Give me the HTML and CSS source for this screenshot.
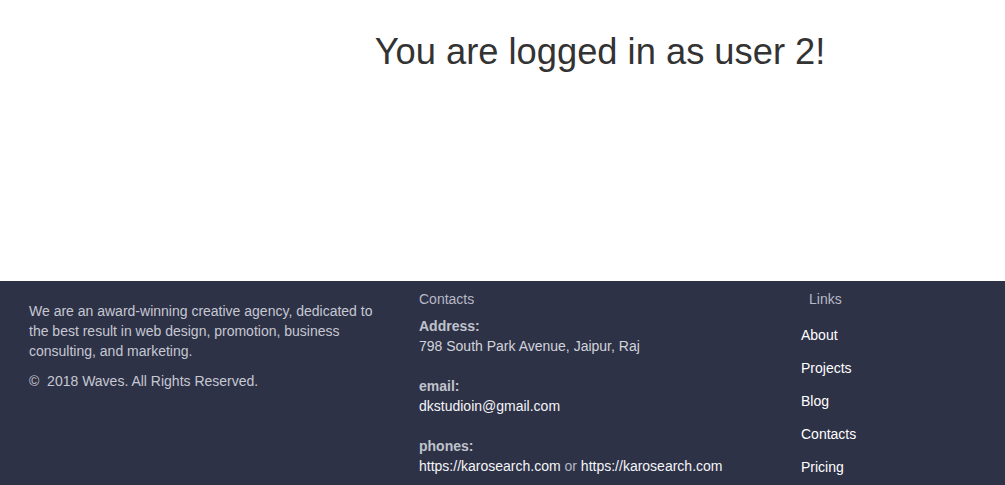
FILE: index.html
```html
<!DOCTYPE html>
<html lang="en">
<head>
<meta charset="utf-8">
<title>Logged in</title>
<link rel="stylesheet" href="styles.css">
</head>
<body>
<main class="hero">
  <h1 class="hero-title">You are logged in as user 2!</h1>
</main>
<footer class="footer">
  <div class="footer-about">
    <p class="about-text">We are an award-winning creative agency, dedicated to the best result in web design, promotion, business consulting, and marketing.</p>
    <p class="copyright">&copy;&nbsp; 2018 Waves. All Rights Reserved.</p>
  </div>
  <div class="footer-contacts">
    <div class="footer-heading">Contacts</div>
    <dl class="contact-list">
      <div class="contact-item">
        <dt class="contact-label">Address:</dt>
        <dd class="contact-value contact-plain">798 South Park Avenue, Jaipur, Raj</dd>
      </div>
      <div class="contact-item">
        <dt class="contact-label">email:</dt>
        <dd class="contact-value"><a class="footer-link" href="#">dkstudioin@gmail.com</a></dd>
      </div>
      <div class="contact-item">
        <dt class="contact-label">phones:</dt>
        <dd class="contact-value"><a class="footer-link" href="#">https://karosearch.com</a> or <a class="footer-link" href="#">https://karosearch.com</a></dd>
      </div>
    </dl>
  </div>
  <div class="footer-links">
    <div class="footer-heading links-heading">Links</div>
    <ul class="link-list">
      <li><a class="footer-link" href="#">About</a></li>
      <li><a class="footer-link" href="#">Projects</a></li>
      <li><a class="footer-link" href="#">Blog</a></li>
      <li><a class="footer-link" href="#">Contacts</a></li>
      <li><a class="footer-link" href="#">Pricing</a></li>
    </ul>
  </div>
</footer>
</body>
</html>
```

FILE: styles.css
```css
* { box-sizing: border-box; }
html, body {
  margin: 0;
  padding: 0;
  background: #ffffff;
  font-family: "Liberation Sans", Arial, Helvetica, sans-serif;
}
.hero {
  height: 281px;
  padding-top: 32px;
  padding-left: 195px;
}
.hero-title {
  margin: 0;
  font-size: 36.3px;
  font-weight: 400;
  line-height: 40px;
  color: #333333;
  text-align: center;
}
.footer {
  background: #2e3247;
  height: 204px;
  display: grid;
  grid-template-columns: 390px 382px 1fr;
  padding-left: 29px;
  font-size: 14px;
  line-height: 20px;
  overflow: hidden;
}
.footer-about {
  padding-top: 20px;
  width: 360px;
}
.about-text {
  margin: 0;
  color: #c6c8d2;
}
.copyright {
  margin: 10px 0 0;
  color: #c6c8d2;
}
.footer-contacts {
  padding-top: 8px;
}
.footer-heading {
  color: #b6b9c6;
}
.contact-list {
  margin: 7px 0 0;
}
.contact-item {
  margin-bottom: 20px;
}
.contact-label {
  font-weight: 700;
  color: #c0c3cd;
}
.contact-value {
  margin: 0;
  color: #b4b7c4;
}
.contact-plain {
  color: #d2d4dc;
}
.footer-link {
  color: #ffffff;
  text-decoration: none;
}
.contact-value .footer-link {
  color: #f4f5f8;
}
.footer-links {
  padding-top: 8px;
}
.links-heading {
  padding-left: 8px;
}
.link-list {
  list-style: none;
  margin: 16px 0 0;
  padding: 0;
  display: flex;
  flex-direction: column;
  gap: 13px;
}
```
